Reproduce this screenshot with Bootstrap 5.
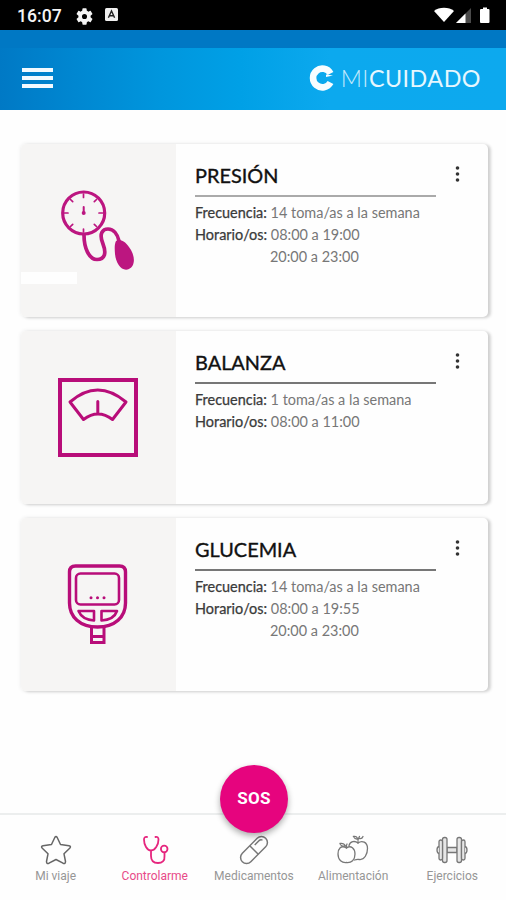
<!DOCTYPE html>
<html lang="es">
<head>
<meta charset="utf-8">
<meta name="viewport" content="width=device-width, initial-scale=1">
<title>Mi Cuidado</title>
<link href="https://cdn.jsdelivr.net/npm/bootstrap@5.3.0/dist/css/bootstrap.min.css" rel="stylesheet">
<style>
body{width:506px;height:900px;background:#fefefe;font-family:Lato,"Liberation Sans",sans-serif;overflow:hidden}
svg{display:block;flex:none}
.status{height:30px;background:#000;color:#f4f4f4;font:500 17.6px/30px Roboto,sans-serif;padding:2px 16px 0 17px}
.gear{margin-left:14px}
.boxed{margin:0 0 3px 12px}
.strip{height:18px;background:#0078c4}
.topbar{height:62px;padding:0 25px 3px 22px;background:linear-gradient(90deg,#0079c5 0,#0087d1 75px,#0096dd 160px,#00a0e6 240px,#0ca9ee 330px,#0da9ee 100%)}
.brand-name{color:#e6f7fe;font-size:23.3px;line-height:28px;white-space:nowrap;letter-spacing:.5px;margin:0 0 0 6px}
.brand-thin{font-weight:300;color:#c3eafc}
.list-area{height:703px;padding:34px 18px 0 21px}
.measure{height:173px;margin-bottom:14px;border-radius:5px;background:#fefefe;box-shadow:3px 1px 3px rgba(0,0,0,.15),0 0 4px rgba(0,0,0,.09);overflow:hidden}
.pic{width:155px;background:#f6f5f4}
.patch{left:0;top:128px;width:56px;height:12px;background:#fefefe}
.info{padding:16px 52px 0 19px}
.measure h2{font-size:19.9px;line-height:30px;color:#111;margin:0;font-weight:400;-webkit-text-stroke:.35px #111;white-space:nowrap}
.rule{height:2px;background:#aaa;margin:5px 0 5px}
.dark{height:1.5px;background:#777;margin-bottom:5.5px}
.measure p{font-size:14.45px;line-height:22px;margin:0;color:#777;white-space:nowrap}
.measure b{font-weight:400;color:#3a3a3a;-webkit-text-stroke:.25px #3a3a3a}
.measure .second{padding-left:75px}
.dots{right:28px;top:22px}
.tabs{height:87px;border-top:2px solid #eceeee;background:#fefefe;padding:0 4px 0 6px}
.tabs a{width:20%;color:#969696;text-decoration:none;font:400 12px/16px Roboto,sans-serif;padding-top:19px;white-space:nowrap}
.tabs a svg{margin-bottom:2px}
.tabs .on{color:#e84a88}
.sos{left:220px;top:765px;width:68px;height:68px;border:0;border-radius:50%;background:#e6047e;color:#fff;font:700 17px Roboto,sans-serif;letter-spacing:.2px;box-shadow:0 3px 6px rgba(0,0,0,.33);padding:0 0 3px}
</style>
</head>
<body class="position-relative">
<div class="status d-flex align-items-center">
  <span>16:07</span>
  <svg class="gear" width="17" height="17" viewBox="2 2 20 20" fill="#f4f4f4"><path d="M19.14 12.94c.04-.3.06-.61.06-.94s-.02-.64-.07-.94l2.03-1.58a.5.5 0 0 0 .12-.61l-1.92-3.32a.49.49 0 0 0-.59-.22l-2.39.96a7 7 0 0 0-1.62-.94l-.36-2.54a.48.48 0 0 0-.48-.41h-3.84a.47.47 0 0 0-.47.41l-.36 2.54c-.59.24-1.13.57-1.62.94l-2.39-.96a.48.48 0 0 0-.59.22L2.74 8.87a.47.47 0 0 0 .12.61l2.03 1.58a6 6 0 0 0 0 1.88l-2.03 1.58a.5.5 0 0 0-.12.61l1.92 3.32c.12.22.37.29.59.22l2.39-.96c.5.38 1.03.7 1.62.94l.36 2.54c.05.24.24.41.48.41h3.84c.24 0 .44-.17.47-.41l.36-2.54a7 7 0 0 0 1.62-.94l2.39.96c.22.08.47 0 .59-.22l1.92-3.32a.47.47 0 0 0-.12-.61zM12 15a3 3 0 1 1 0-6 3 3 0 0 1 0 6z"/></svg>
  <svg class="boxed" width="13" height="13" viewBox="0 0 13 13"><rect width="13" height="13" rx="1.500" fill="#f0f0f0"/><path d="M3.400 9.700 6.500 3l3.100 6.700M4.500 7.800h4" fill="none" stroke="#222" stroke-width="1.400"/></svg>
  <svg class="ms-auto" width="56" height="18" viewBox="0 0 56 18"><path d="M0 4C5-.3 15-.3 20 4L10 15z" fill="#fff"/><path d="M22 16 37 1v15z" fill="#4a4a4a"/><path d="M22 16 31.500 6.500V16z" fill="#fff"/><path d="M47.500 2H49V.5h4V2h1.500q1 0 1 1v12q0 1-1 1h-7.500q-1 0-1-1V3q0-1 1-1z" fill="#fff"/></svg>
</div>
<div class="strip"></div>
<header class="topbar d-flex align-items-center justify-content-between">
  <svg width="31" height="22" viewBox="0 0 31 22"><path d="M0 3h31M0 11h31M0 19h31" stroke="#f2faff" stroke-width="3.800"/></svg>
  <div class="d-flex align-items-center">
    <svg width="26" height="26" viewBox="0 0 26 26"><path d="M21.500 8.500A9.300 9.300 0 1 0 21.500 17.500" fill="none" stroke="#f8fdff" stroke-width="6.600"/><path d="M17 9.500l7 1-7 1.500z" fill="#f8fdff"/></svg>
    <span class="brand-name"><span class="brand-thin">MI</span>CUIDADO</span>
  </div>
</header>
<main class="list-area">
  <section class="measure d-flex position-relative">
    <div class="pic position-relative flex-shrink-0">
      <div class="patch position-absolute"></div>
      <svg class="position-relative" width="155" height="173" viewBox="21 144 155 173" fill="none" stroke="#bc1680" stroke-linecap="round"><circle cx="83.700" cy="213" r="21" stroke-width="3.200"/><path d="M83.500 194v3.500M83.500 229v3M64.500 213h3.500M99 213h3.500M70.500 199.500l2.200 2.200M96.500 199.500l-2.200 2.200M70.500 226.500l2.200-2.200M96.500 226.500l-2.200-2.200" stroke-width="1.700"/><path d="M83.700 207v6" stroke-width="2"/><circle cx="83.700" cy="213" r="2" fill="#bc1680" stroke="none"/><path d="M84 235C84 248 89 259.500 97 259.500C105 259.500 106.500 253 103 244C98.500 233 103 229 108 229C113.500 229 117.500 234 119 241" stroke-width="3.700"/><path d="M116 241C120 238 126 241 131 250C136 259 134 267 129 269C122 272 116 264 115 254C114.500 248 114.500 244 116 241z" fill="#bc1680" stroke="none"/></svg>
    </div>
    <div class="info flex-grow-1">
      <h2>PRESIÓN</h2><div class="rule"></div>
      <p><b>Frecuencia:</b> 14 toma/as a la semana</p><p><b>Horario/os:</b> 08:00 a 19:00</p><p class="second">20:00 a 23:00</p>
    </div>
    <svg class="dots position-absolute" width="5" height="16" viewBox="0 0 5 16" fill="#333"><circle cx="2.500" cy="2" r="1.800"/><circle cx="2.500" cy="8" r="1.800"/><circle cx="2.500" cy="14" r="1.800"/></svg>
  </section>
  <section class="measure d-flex position-relative">
    <div class="pic flex-shrink-0">
      <svg width="155" height="173" viewBox="21 331 155 173" fill="none" stroke="#b80d79"><rect x="60" y="380" width="76" height="75" stroke-width="4"/><path d="M70 402Q97.500 378 126 402L112.500 419.500Q98 408.500 83.500 419.500zM97.800 401.500v12" stroke-width="3" stroke-linejoin="round" stroke-linecap="round"/></svg>
    </div>
    <div class="info flex-grow-1">
      <h2>BALANZA</h2><div class="rule dark"></div>
      <p><b>Frecuencia:</b> 1 toma/as a la semana</p><p><b>Horario/os:</b> 08:00 a 11:00</p>
    </div>
    <svg class="dots position-absolute" width="5" height="16" viewBox="0 0 5 16" fill="#333"><circle cx="2.500" cy="2" r="1.800"/><circle cx="2.500" cy="8" r="1.800"/><circle cx="2.500" cy="14" r="1.800"/></svg>
  </section>
  <section class="measure d-flex position-relative">
    <div class="pic flex-shrink-0">
      <svg width="155" height="173" viewBox="21 518 155 173" fill="none" stroke="#b80d79"><path d="M75.500 566H119.500Q125.500 566 125.500 572V603C125.500 617 115 627 97.500 627C80 627 69.500 617 69.500 603V572Q69.500 566 75.500 566z" stroke-width="3.400"/><rect x="76" y="573.500" width="43" height="31" rx="4.500" stroke-width="2.600"/><path d="M78.500 611H94V620.500C87 620 81 617 78.500 611zM101.500 611H117C115 617 109 620 101.500 620.500z" stroke-width="2.600" stroke-linejoin="round"/><path d="M91.500 627V642.500H104V627M91.500 636.500H104" stroke-width="3"/><g fill="#b80d79" stroke="none"><circle cx="91" cy="597.800" r="1.500"/><circle cx="97.500" cy="597.800" r="1.500"/><circle cx="104" cy="597.800" r="1.500"/></g></svg>
    </div>
    <div class="info flex-grow-1">
      <h2>GLUCEMIA</h2><div class="rule dark"></div>
      <p><b>Frecuencia:</b> 14 toma/as a la semana</p><p><b>Horario/os:</b> 08:00 a 19:55</p><p class="second">20:00 a 23:00</p>
    </div>
    <svg class="dots position-absolute" width="5" height="16" viewBox="0 0 5 16" fill="#333"><circle cx="2.500" cy="2" r="1.800"/><circle cx="2.500" cy="8" r="1.800"/><circle cx="2.500" cy="14" r="1.800"/></svg>
  </section>
</main>
<nav class="tabs d-flex">
  <a href="#" class="d-flex flex-column align-items-center">
    <svg width="32" height="32" viewBox="0 0 32 32" fill="none" stroke="#666" stroke-width="1.500" stroke-linejoin="round"><path d="M14.800 3.500Q16 1.500 17.200 3.500L20.500 10.500L29 11.700Q31.500 12.300 29.700 14.200L24 19.800L25.500 27.500Q25.500 30.200 23 29.200L16 25.500L9 29.200Q6.500 30.200 6.500 27.500L8 19.800L2.300 14.200Q.5 12.300 3 11.700L11.500 10.500z"/></svg>
    <span>Mi viaje</span></a>
  <a href="#" class="on d-flex flex-column align-items-center">
    <svg width="32" height="32" viewBox="0 0 32 32" fill="none" stroke="#e6267e" stroke-width="1.800" stroke-linecap="round"><path d="M8 3Q5 2.500 5 5.500C5 11 8 16.500 12 16.500S19.500 11 19.500 5.500Q19.500 2.500 16.500 3M12 17V22C12 27 15 29 19 29C23 29 26 27 25.500 22V18.500"/><circle cx="25.200" cy="15" r="3.300"/></svg>
    <span>Controlarme</span></a>
  <a href="#" class="d-flex flex-column align-items-center">
    <svg width="32" height="32" viewBox="0 0 32 32" fill="none" stroke="#777" stroke-width="1.500"><g transform="rotate(-45 16 16)"><rect x="-.5" y="10" width="33" height="12" rx="6"/><path d="M16 10v12M20 13h6q2 0 3 2"/></g></svg>
    <span>Medicamentos</span></a>
  <a href="#" class="d-flex flex-column align-items-center">
    <svg width="32" height="32" viewBox="0 0 32 32" fill="none" stroke="#777" stroke-width="1.300" stroke-linecap="round"><path d="M9.500 14C4 10.500 1 15 1 20C1 26 5 29 9.500 28.500C14.500 29 18 26 18 20C18 15 14 10.500 9.500 14z"/><path d="M9.500 14Q9 11.500 10 10M8.500 12Q3.500 12.500 3 9.500Q7 9 8.500 12"/><path d="M12 11.500C13 7 18 6.500 21 9C25 6 30.500 8 30.500 14.500C30.500 20 27.500 26 22.500 25.500Q20 25 17.500 26"/><path d="M21 9Q20.500 5 22.500 2.500M20.500 5Q18 5.500 16.500 2.500Q20 1.800 20.500 5M22.500 4.500Q25 5 26 2.500"/></svg>
    <span>Alimentación</span></a>
  <a href="#" class="d-flex flex-column align-items-center">
    <svg width="32" height="32" viewBox="0 0 32 32" fill="#e6e6e6" stroke="#777" stroke-width="1.300"><path d="M11 13.500h10v5H11z"/><rect x="6.500" y="3.500" width="4.500" height="25" rx="2"/><rect x="3" y="6" width="3.500" height="20" rx="1.700"/><rect x="21" y="3.500" width="4.500" height="25" rx="2"/><rect x="25.500" y="6" width="3.500" height="20" rx="1.700"/><path d="M3 12.500Q1 13 1 16T3 19.500M29 12.500Q31 13 31 16T29 19.500"/></svg>
    <span>Ejercicios</span></a>
</nav>
<button class="sos position-absolute" type="button">SOS</button>
<script src="https://cdn.jsdelivr.net/npm/bootstrap@5.3.0/dist/js/bootstrap.bundle.min.js"></script>
</body>
</html>
